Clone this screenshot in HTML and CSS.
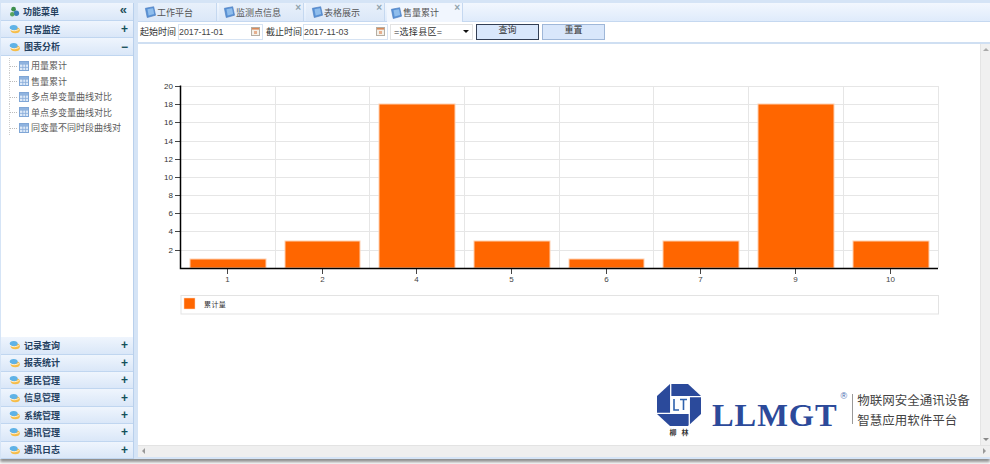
FILE: index.html
```html
<!DOCTYPE html>
<html lang="zh">
<head>
<meta charset="utf-8">
<title>售量累计</title>
<link rel="stylesheet" href="styles.css">
</head>
<body>
<svg class="defs" width="0" height="0">
  <defs>
    <symbol id="cloud" viewBox="0 0 14 12">
      <ellipse cx="8" cy="7.500" rx="5.800" ry="3.800" fill="#f6bd48"/>
      <ellipse cx="6" cy="4.200" rx="5" ry="3.400" fill="#5fb2e6"/>
      <path d="M1.500 6.500c3 2.400 7 2.200 11 .2" stroke="#fff" stroke-width="1" fill="none"/>
    </symbol>
    <symbol id="grid" viewBox="0 0 10 10">
      <rect x=".5" y=".5" width="9" height="9" fill="#dce9f8" stroke="#7fa6d6"/>
      <path d="M.5 3.200h9M.5 6.400h9M3.800.5v9M6.600.5v9" stroke="#86abd9" stroke-width=".8"/>
      <rect x="1" y="1" width="8" height="2" fill="#8fb3df"/>
    </symbol>
    <symbol id="book" viewBox="0 0 13 13">
      <path d="M1.500 2.500 10.500.8 12.500 10 3.500 12.500Z" fill="#5b93d6" stroke="#4a7dbf" stroke-width=".7"/>
      <path d="M3.800 3.600 9.800 2.500 11 8.800 5 10.300Z" fill="#8fbdec"/>
    </symbol>
    <symbol id="cal" viewBox="0 0 9 9">
      <rect x=".5" y=".5" width="8" height="8" fill="#f4f1ea" stroke="#b5aea3"/>
      <rect x="1" y="1" width="7" height="1.600" fill="#d98a5a"/>
      <rect x="3" y="4" width="3" height="3" fill="#e6b08f"/>
    </symbol>
  </defs>
</svg>

<div class="app">
  <aside class="side">
    <div class="side-title">
      <svg class="title-ico" viewBox="0 0 12 12"><circle cx="5" cy="3.500" r="2.600" fill="#3d8f4d"/><circle cx="8" cy="8" r="3" fill="#3a7fb8"/><circle cx="3.500" cy="9" r="2.400" fill="#5aa55f"/></svg>
      <span class="side-title-text">功能菜单</span>
      <span class="collapse">«</span>
    </div>
    <div class="acc"><svg class="acc-ico"><use href="#cloud"/></svg><span class="acc-text">日常监控</span><span class="acc-sign">+</span></div>
    <div class="acc acc-open"><svg class="acc-ico"><use href="#cloud"/></svg><span class="acc-text">图表分析</span><span class="acc-sign minus">−</span></div>
    <ul class="tree">
      <li class="leaf"><svg class="leaf-ico"><use href="#grid"/></svg>用量累计</li>
      <li class="leaf"><svg class="leaf-ico"><use href="#grid"/></svg>售量累计</li>
      <li class="leaf"><svg class="leaf-ico"><use href="#grid"/></svg>多点单变量曲线对比</li>
      <li class="leaf"><svg class="leaf-ico"><use href="#grid"/></svg>单点多变量曲线对比</li>
      <li class="leaf"><svg class="leaf-ico"><use href="#grid"/></svg>同变量不同时段曲线对</li>
    </ul>
    <div class="acc"><svg class="acc-ico"><use href="#cloud"/></svg><span class="acc-text">记录查询</span><span class="acc-sign">+</span></div>
    <div class="acc"><svg class="acc-ico"><use href="#cloud"/></svg><span class="acc-text">报表统计</span><span class="acc-sign">+</span></div>
    <div class="acc"><svg class="acc-ico"><use href="#cloud"/></svg><span class="acc-text">惠民管理</span><span class="acc-sign">+</span></div>
    <div class="acc"><svg class="acc-ico"><use href="#cloud"/></svg><span class="acc-text">信息管理</span><span class="acc-sign">+</span></div>
    <div class="acc"><svg class="acc-ico"><use href="#cloud"/></svg><span class="acc-text">系统管理</span><span class="acc-sign">+</span></div>
    <div class="acc"><svg class="acc-ico"><use href="#cloud"/></svg><span class="acc-text">通讯管理</span><span class="acc-sign">+</span></div>
    <div class="acc"><svg class="acc-ico"><use href="#cloud"/></svg><span class="acc-text">通讯日志</span><span class="acc-sign">+</span></div>
  </aside>

  <main class="main">
    <nav class="tabs">
      <div class="tab tab-first"><svg class="tab-ico"><use href="#book"/></svg>工作平台</div>
      <div class="tab tab-a"><svg class="tab-ico"><use href="#book"/></svg>监测点信息<span class="tab-x">×</span></div>
      <div class="tab tab-b"><svg class="tab-ico"><use href="#book"/></svg>表格展示<span class="tab-x">×</span></div>
      <div class="tab tab-c tab-active"><svg class="tab-ico"><use href="#book"/></svg>售量累计<span class="tab-x">×</span></div>
    </nav>
    <form class="toolbar">
      <span class="lbl">起始时间</span>
      <div class="date"><span>2017-11-01</span><svg class="cal"><use href="#cal"/></svg></div>
      <span class="lbl lbl2">截止时间</span>
      <div class="date"><span>2017-11-03</span><svg class="cal"><use href="#cal"/></svg></div>
      <div class="select"><span>=选择县区=</span><span class="caret"></span></div>
      <div class="btn btn-focus">查询</div>
      <div class="btn">重置</div>
    </form>
    <div class="content">
      <svg class="chart" width="842" height="401" viewBox="138 44 842 401">
        <g class="gridlines">
          <path d="M181 86.500H938M181 104.500H938M181 122.500H938M181 141.500H938M181 159.500H938M181 177.500H938M181 195.500H938M181 213.500H938M181 231.500H938M181 250.500H938"/>
          <path d="M275.500 86V268M369.500 86V268M464.500 86V268M559.500 86V268M653.500 86V268M748.500 86V268M843.500 86V268M938.500 86V268"/>
        </g>
        <g class="bars">
          <rect x="190" y="259" width="76" height="9"/>
          <rect x="285" y="241" width="75" height="27"/>
          <rect x="379" y="104" width="76" height="164"/>
          <rect x="474" y="241" width="76" height="27"/>
          <rect x="569" y="259" width="75" height="9"/>
          <rect x="663" y="241" width="76" height="27"/>
          <rect x="758" y="104" width="76" height="164"/>
          <rect x="853" y="241" width="76" height="27"/>
        </g>
        <g class="ticks">
          <path d="M175 86.500h5M175 104.500h5M175 122.500h5M175 141.500h5M175 159.500h5M175 177.500h5M175 195.500h5M175 213.500h5M175 231.500h5M175 250.500h5"/>
          <path d="M227.500 269v5M322.500 269v5M416.500 269v5M511.500 269v5M606.500 269v5M700.500 269v5M795.500 269v5M890.500 269v5"/>
        </g>
        <path class="axis" d="M180.500 85.500V268.500H938"/>
        <g class="ylab">
          <text x="173" y="89">20</text><text x="173" y="107">18</text><text x="173" y="125">16</text><text x="173" y="144">14</text><text x="173" y="162">12</text><text x="173" y="180">10</text><text x="173" y="198">8</text><text x="173" y="216">6</text><text x="173" y="234">4</text><text x="173" y="253">2</text>
        </g>
        <g class="xlab">
          <text x="227.500" y="282">1</text><text x="322.500" y="282">2</text><text x="416.500" y="282">4</text><text x="511.500" y="282">5</text><text x="606.500" y="282">6</text><text x="700.500" y="282">7</text><text x="795.500" y="282">9</text><text x="890.500" y="282">10</text>
        </g>
        <rect class="legend" x="181" y="295.500" width="757.500" height="18.500"/>
        <rect class="legend-swatch" x="184" y="298" width="11" height="11"/>
        <text class="legend-text" x="204" y="307">累计量</text>
      </svg>
      <div class="logo">
        <div class="logo-mark">
          <svg width="44" height="42" viewBox="0 0 44 42">
            <path d="M13 0H31L44 12V30L31 42H13L0 30V12Z" fill="#2b4a9b"/>
            <rect x="14" y="13" width="18" height="16" fill="#fff"/>
            <path d="M13.700 0V29.300H0M0 29.300H32.300M32.300 42V12.700H44M13.700 12.700H44" stroke="#fff" stroke-width="1.300" fill="none"/>
            <path d="M17 15V26H22M23 15.500H30M26.500 15.500V26" stroke="#2f62ad" stroke-width="1.600" fill="none"/>
          </svg>
          <span class="logo-cn">柳 林</span>
        </div>
        <span class="logo-word">LLMGT</span>
        <span class="logo-reg">®</span>
        <span class="logo-rule"></span>
        <div class="logo-slogan">
          <span>物联网安全通讯设备</span>
          <span>智慧应用软件平台</span>
        </div>
      </div>
      <div class="vscroll"><span class="arrow-up"></span><span class="arrow-down"></span></div>
    </div>
    <div class="hscroll"><span class="arrow-left"></span><span class="arrow-right"></span></div>
  </main>
</div>
</body>
</html>
```
FILE: styles.css
```css
html, body { margin: 0; padding: 0; width: 990px; height: 464px; overflow: hidden; background: #fff; }
body { font-family: "Liberation Sans", "Noto Sans CJK SC", sans-serif; font-size: 9px; color: #333; }
.defs { display: block; height: 0; }
.app {
  width: 990px; height: 459px; padding: 3px 0 0 1px; box-sizing: border-box;
  display: flex; gap: 4px; background: #d5e4f6;
  box-shadow: 0 3px 3px #8c8c8c;
}
.side { width: 133px; height: 456px; display: flex; flex-direction: column; background: #fff; border-right: 1px solid #b9d0ec; box-sizing: border-box; }
.side-title, .acc {
  display: flex; align-items: center; box-sizing: border-box; flex: none;
  background: linear-gradient(#eff5fd, #dae7f8);
  border-bottom: 1px solid #c0d6f0;
}
.side-title { height: 18px; padding: 0 6px 0 8px; }
.title-ico { width: 11px; height: 11px; margin-right: 3px; }
.side-title-text { flex: 1; font-size: 9px; font-weight: bold; color: #24405f; }
.collapse { font-size: 13px; font-weight: bold; color: #24505a; line-height: 10px; margin-top: -3px; }
.acc { height: 17.400px; padding: 0 5px 0 8px; }
.acc-open { height: 18px; }
.acc-ico { width: 11px; height: 10px; margin-right: 5px; }
.acc-text { flex: 1; font-size: 9px; font-weight: bold; color: #24405f; margin-left: -1px; }
.acc-sign { font-size: 12px; font-weight: bold; color: #14505a; line-height: 10px; }
.tree { list-style: none; margin: 0; padding: 1.500px 0 0 0; flex: 1; min-height: 0; }
.leaf { height: 15.500px; display: flex; align-items: center; padding-left: 18px; font-size: 9px; color: #5c5c5c; position: relative; }
.leaf::before { content: ""; position: absolute; left: 8px; top: 8px; width: 8px; border-top: 1px dotted #bbb; }
.leaf::after { content: ""; position: absolute; left: 8px; top: 0; height: 15px; border-left: 1px dotted #ccc; }
.leaf-ico { width: 10px; height: 10px; margin-right: 2px; }

.main { width: 852px; height: 454px; display: flex; flex-direction: column; }
.tabs { height: 19px; flex: none; display: flex; gap: 2px; background: linear-gradient(#f2f7fe, #dfebfb); border-bottom: 1px solid #c5d8f0; box-sizing: border-box; }
.tab { position: relative; height: 18px; display: flex; align-items: center; box-sizing: border-box; padding-left: 6px; font-size: 9px; color: #555; background: linear-gradient(#e8f0fb, #dbe7f8); border-right: 1px solid #c5d8f0; }
.tab-first { width: 79px; }
.tab-a { width: 85px; padding-left: 4px; }
.tab-b { width: 79px; padding-left: 5px; }
.tab-c { width: 76px; padding-left: 3px; }
.tab-active { background: #f1f6fe; height: 19px; }
.tab-ico { width: 12px; height: 12px; margin-right: 1px; flex: none; }
.tab-x { position: absolute; right: 2px; top: -1px; font-size: 10px; color: #8fa3ad; font-weight: bold; }
.toolbar { height: 22px; flex: none; display: flex; align-items: center; background: #fff; border-bottom: 2px solid #cfdff2; box-sizing: border-box; padding: 0 0 1px 2px; }
.lbl { font-size: 9px; color: #333; width: 36px; margin-right: 2px; white-space: nowrap; }
.lbl2 { margin-left: 2px; margin-right: 1px; width: 36px; }
.date { width: 85px; height: 16px; display: flex; align-items: center; justify-content: space-between; box-sizing: border-box; border: 1px solid #d6e3f3; padding: 0 2px 0 0; font-size: 8.800px; color: #444; margin-right: 1px; }
.cal { width: 9px; height: 9px; }
.select { width: 83px; height: 16px; margin-left: 1px; display: flex; align-items: center; justify-content: space-between; box-sizing: border-box; border: 1px solid #e3e3e3; padding: 0 3px 0 3px; font-size: 9px; color: #333; letter-spacing: .3px; }
.caret { width: 0; height: 0; border: 3px solid transparent; border-top: 3px solid #111; border-bottom: 0; }
.btn { width: 63px; height: 16px; box-sizing: border-box; border: 1px solid #9fb7d8; background: #d9e7fb; text-align: center; font-size: 9px; line-height: 10px; color: #333; }
.btn-focus { border: 1px solid #333f55; margin-left: 3px; margin-right: 3px; }

.content { position: relative; flex: 1; min-height: 0; background: #fff; overflow: hidden; }
.chart { display: block; }
.gridlines path { stroke: #e6e6e6; stroke-width: 1; fill: none; }
.bars rect { fill: #ff6600; stroke: #ffd0b0; stroke-width: 1; }
.ticks path { stroke: #444; stroke-width: 1; fill: none; }
.axis { stroke: #000; stroke-width: 1.500; fill: none; }
.ylab text { font-family: "Liberation Sans", sans-serif; font-size: 8px; text-anchor: end; fill: #333; }
.xlab text { font-family: "Liberation Sans", sans-serif; font-size: 8px; text-anchor: middle; fill: #444; }
.legend { fill: #fff; stroke: #e3e3e3; stroke-width: 1; }
.legend-swatch { fill: #ff6600; stroke: #ffd8c0; stroke-width: .5; }
.legend-text { font-size: 7px; fill: #333; letter-spacing: .4px; }

.logo { position: absolute; left: 519px; top: 340px; display: flex; align-items: flex-start; height: 54px; }
.logo-mark { width: 44px; display: flex; flex-direction: column; align-items: center; }
.logo-cn { font-size: 7px; line-height: 9px; margin-top: 2px; font-weight: bold; color: #333; word-spacing: 3px; }
.logo-word { font-family: "Liberation Serif", serif; font-weight: bold; font-size: 32.500px; line-height: 36px; margin: 13px 0 0 11px; color: #2c4a9a; letter-spacing: .9px; white-space: nowrap; }
.logo-reg { font-size: 9px; line-height: 10px; margin: 7px 0 0 3px; color: #4067b0; }
.logo-rule { width: 1px; height: 30px; margin: 10px 0 0 5px; background: #999; flex: none; }
.logo-slogan { display: flex; flex-direction: column; padding-left: 4px; margin-top: 7px; font-size: 12.500px; color: #444; white-space: nowrap; width: 120px; }
.logo-slogan span { height: 20px; line-height: 20px; }
.vscroll { position: absolute; right: 0; top: 0; bottom: 0; width: 10px; background: #f0f0f0; border-left: 1px solid #e4e4e4; box-sizing: border-box; }
.arrow-up { position: absolute; top: 4px; left: 2px; border: 3px solid transparent; border-bottom: 3px solid #aaa; border-top: 0; }
.arrow-down { position: absolute; bottom: 4px; left: 2px; border: 3px solid transparent; border-top: 3px solid #888; border-bottom: 0; }
.hscroll { position: relative; height: 12px; flex: none; background: #efefef; border-top: 1px solid #e3e3e3; box-sizing: border-box; }
.arrow-left { position: absolute; left: 4px; top: 2px; border: 3px solid transparent; border-right: 3px solid #999; border-left: 0; }
.arrow-right { position: absolute; right: 4px; top: 2px; border: 3px solid transparent; border-left: 3px solid #999; border-right: 0; }
```
